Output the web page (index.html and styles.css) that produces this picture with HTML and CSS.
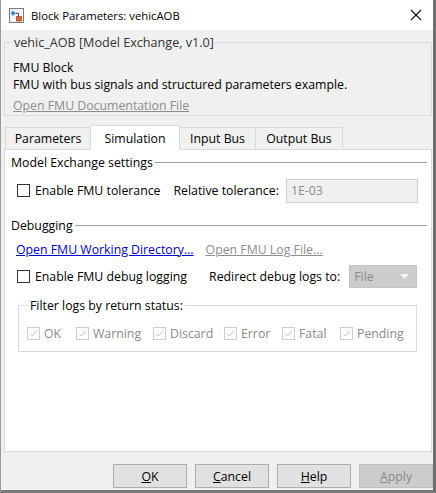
FILE: index.html
```html
<!DOCTYPE html>
<html>
<head>
<meta charset="utf-8">
<link rel="stylesheet" href="styles.css">
</head>
<body>
<div class="window">
  <div class="titlebar">
    <svg class="appicon" width="15" height="15" viewBox="0 0 15 15">
      <rect x="0.5" y="0.5" width="14" height="14" fill="#f4f4f4" stroke="#7a7a7a"/>
      <polygon points="3,2.5 3,8 7,5.25" fill="#2f7fd6"/>
      <rect x="2" y="4.5" width="2" height="1.5" fill="#2f7fd6"/>
      <path d="M7 5.25 H9.5 V8.5" fill="none" stroke="#444" stroke-width="1"/>
      <rect x="7.5" y="8.5" width="5" height="4.5" fill="#e0641e" stroke="#8a3a10" stroke-width="0.6"/>
    </svg>
    <span class="title">Block Parameters: vehicAOB</span>
    <svg class="close" width="12" height="12" viewBox="0 0 12 12">
      <path d="M1 1 L11 11 M11 1 L1 11" stroke="#111" stroke-width="1.1"/>
    </svg>
  </div>
  <div class="content">
    <fieldset class="infobox">
      <legend>vehic_AOB [Model Exchange, v1.0]</legend>
      <div class="line">FMU Block</div>
      <div class="line">FMU with bus signals and structured parameters example.</div>
      <div class="doclink">Open FMU Documentation File</div>
    </fieldset>
    <div class="tabs">
      <div class="tab t1">Parameters</div>
      <div class="tab t2 active">Simulation</div>
      <div class="tab t3">Input Bus</div>
      <div class="tab t4">Output Bus</div>
    </div>
    <div class="panel">
      <div class="section">
        <span>Model Exchange settings</span><span class="rule"></span>
      </div>
      <div class="row row-tol">
        <label class="check"><span class="box"></span>Enable FMU tolerance</label>
        <span class="label-rel">Relative tolerance:</span>
        <span class="textbox">1E-03</span>
      </div>
      <div class="section section-debug">
        <span>Debugging</span><span class="rule"></span>
      </div>
      <div class="row row-links">
        <span class="link">Open FMU Working Directory...</span>
        <span class="link disabled">Open FMU Log File...</span>
      </div>
      <div class="row row-debug">
        <label class="check"><span class="box"></span>Enable FMU debug logging</label>
        <span class="label-redir">Redirect debug logs to:</span>
        <span class="dropdown">File<svg width="9" height="5" viewBox="0 0 9 5"><polygon points="0,0 9,0 4.5,5" fill="#f4f4f4"/></svg></span>
      </div>
      <fieldset class="filter">
        <legend>Filter logs by return status:</legend>
        <div class="filter-row">
          <span class="dcheck c-ok"><span class="dbox"><svg width="11" height="11" viewBox="0 0 11 11"><path d="M2 5.5 L4.5 8 L9 2.5" fill="none" stroke="#c4c4c4" stroke-width="1"/></svg></span>OK</span>
          <span class="dcheck c-warn"><span class="dbox"><svg width="11" height="11" viewBox="0 0 11 11"><path d="M2 5.5 L4.5 8 L9 2.5" fill="none" stroke="#c4c4c4" stroke-width="1"/></svg></span>Warning</span>
          <span class="dcheck c-disc"><span class="dbox"><svg width="11" height="11" viewBox="0 0 11 11"><path d="M2 5.5 L4.5 8 L9 2.5" fill="none" stroke="#c4c4c4" stroke-width="1"/></svg></span>Discard</span>
          <span class="dcheck c-err"><span class="dbox"><svg width="11" height="11" viewBox="0 0 11 11"><path d="M2 5.5 L4.5 8 L9 2.5" fill="none" stroke="#c4c4c4" stroke-width="1"/></svg></span>Error</span>
          <span class="dcheck c-fat"><span class="dbox"><svg width="11" height="11" viewBox="0 0 11 11"><path d="M2 5.5 L4.5 8 L9 2.5" fill="none" stroke="#c4c4c4" stroke-width="1"/></svg></span>Fatal</span>
          <span class="dcheck c-pend"><span class="dbox"><svg width="11" height="11" viewBox="0 0 11 11"><path d="M2 5.5 L4.5 8 L9 2.5" fill="none" stroke="#c4c4c4" stroke-width="1"/></svg></span>Pending</span>
        </div>
      </fieldset>
    </div>
    <div class="buttons">
      <button class="btn"><u>O</u>K</button>
      <button class="btn"><u>C</u>ancel</button>
      <button class="btn"><u>H</u>elp</button>
      <button class="btn disabled"><u>A</u>pply</button>
    </div>
  </div>
</div>
</body>
</html>
```
FILE: styles.css
```css
* { box-sizing: border-box; }
html, body { margin: 0; padding: 0; }
body {
  width: 436px;
  height: 493px;
  background: #f0f0f0;
  font-family: "Open Sans", "Noto Sans", sans-serif;
  font-size: 12.3px;
  color: #000;
  overflow: hidden;
}
.window {
  width: 436px;
  height: 493px;
  border-left: 1px solid #9a9a9a;
  border-right: 3px solid #6e6e6e;
  border-bottom: 3px solid #7a7a7a;
  display: flex;
  flex-direction: column;
}
.titlebar {
  height: 30px;
  background: #fff;
  display: flex;
  align-items: center;
  padding-left: 8px;
  padding-right: 5px;
  flex-shrink: 0;
}
.appicon { flex-shrink: 0; margin-right: 7px; }
.title { font-size: 11.3px; flex: 1; }
.close { margin-right: 6px; }
.content {
  flex: 1;
  display: flex;
  flex-direction: column;
  padding: 4px 0 0 3px;
}
.infobox {
  margin: 0 1px 0 0;
  width: 428px;
  border: 1px solid #dcdcdc;
  padding: 8px 8px 0 8px;
  height: 82px;
}
.infobox legend {
  font-size: 12.6px;
  color: #333;
  padding: 0 1px;
  margin-left: 0;
}
.line { line-height: 17px; }
.doclink {
  margin-top: 4px;
  color: #8d8d8d;
  text-decoration: underline;
}
.tabs {
  display: flex;
  margin-top: 10px;
  padding-left: 1px;
  height: 23px;
  align-items: flex-end;
}
.tab {
  height: 22px;
  border: 1px solid #d9d9d9;
  border-bottom: none;
  display: flex;
  align-items: center;
  justify-content: center;
  background: #f0f0f0;
  margin-right: -1px;
}
.t1 { width: 86px; }
.t2 { width: 90px; }
.t3 { width: 77px; }
.t4 { width: 88px; }
.tab.active {
  height: 25px;
  background: #fff;
  margin-bottom: -1px;
  position: relative;
  z-index: 1;
}
.panel {
  width: 428px;
  height: 303px;
  background: #fff;
  border: 1px solid #d9d9d9;
  padding: 3px 4px 0 6px;
  display: flex;
  flex-direction: column;
}
.section {
  display: flex;
  align-items: center;
  height: 18px;
}
.section .rule {
  flex: 1;
  height: 1px;
  background: #a0a0a0;
  margin-left: 2px;
  margin-top: 1px;
}
.row { display: flex; align-items: center; }
.row-tol { height: 23px; margin-top: 8px; padding-left: 6px; }
.check { display: flex; align-items: center; }
.box {
  width: 13px; height: 13px;
  border: 1px solid #333;
  background: #fff;
  margin-right: 5px;
}
.label-rel { margin-left: 13px; }
.textbox {
  margin-left: 7px;
  width: 132px;
  height: 24px;
  border: 1px solid #d0d0d0;
  background: #f0f0f0;
  color: #8a8a8a;
  padding-left: 4px;
  display: flex;
  align-items: center;
}
.section-debug { margin-top: 14px; }
.row-links { height: 18px; margin-top: 6px; padding-left: 5px; }
.link { color: #0000cc; text-decoration: underline; }
.link.disabled { color: #8d8d8d; margin-left: 12px; }
.row-debug { height: 24px; margin-top: 6px; padding-left: 6px; }
.label-redir { margin-left: 22px; }
.dropdown {
  margin-left: 9px;
  width: 68px;
  height: 23px;
  background: #cccccc;
  border: 1px solid #c4c4c4;
  color: #8a8a8a;
  display: flex;
  align-items: center;
  justify-content: space-between;
  padding: 0 7px 0 4px;
}
.filter {
  margin: 9px 10px 0 7px;
  border: 1px solid #dcdcdc;
  padding: 11px 6px 9px 8px;
}
.filter legend {
  padding: 0 2px;
  margin-left: 1px;
}
.filter-row { display: flex; align-items: center; color: #8a8a8a; }
.dcheck { display: flex; align-items: center; }
.c-ok { width: 49px; }
.c-warn { width: 77px; }
.c-disc { width: 71px; }
.c-err { width: 58px; }
.c-fat { width: 58px; }
.dbox {
  width: 13px; height: 13px;
  border: 1px solid #cdcdcd;
  margin-right: 4px;
  display: flex;
  align-items: center;
  justify-content: center;
}
.buttons {
  display: flex;
  justify-content: flex-end;
  gap: 8px;
  padding-right: 0px;
  margin-top: 12px;
}
.btn {
  width: 74px;
  height: 24px;
  border: 1px solid #adadad;
  background: #e1e1e1;
  font-family: "Open Sans", "Noto Sans", sans-serif;
  font-size: 12.3px;
  color: #000;
  padding: 0;
}
.btn.disabled {
  background: #cccccc;
  border-color: #bfbfbf;
  color: #8a8a8a;
}
```
